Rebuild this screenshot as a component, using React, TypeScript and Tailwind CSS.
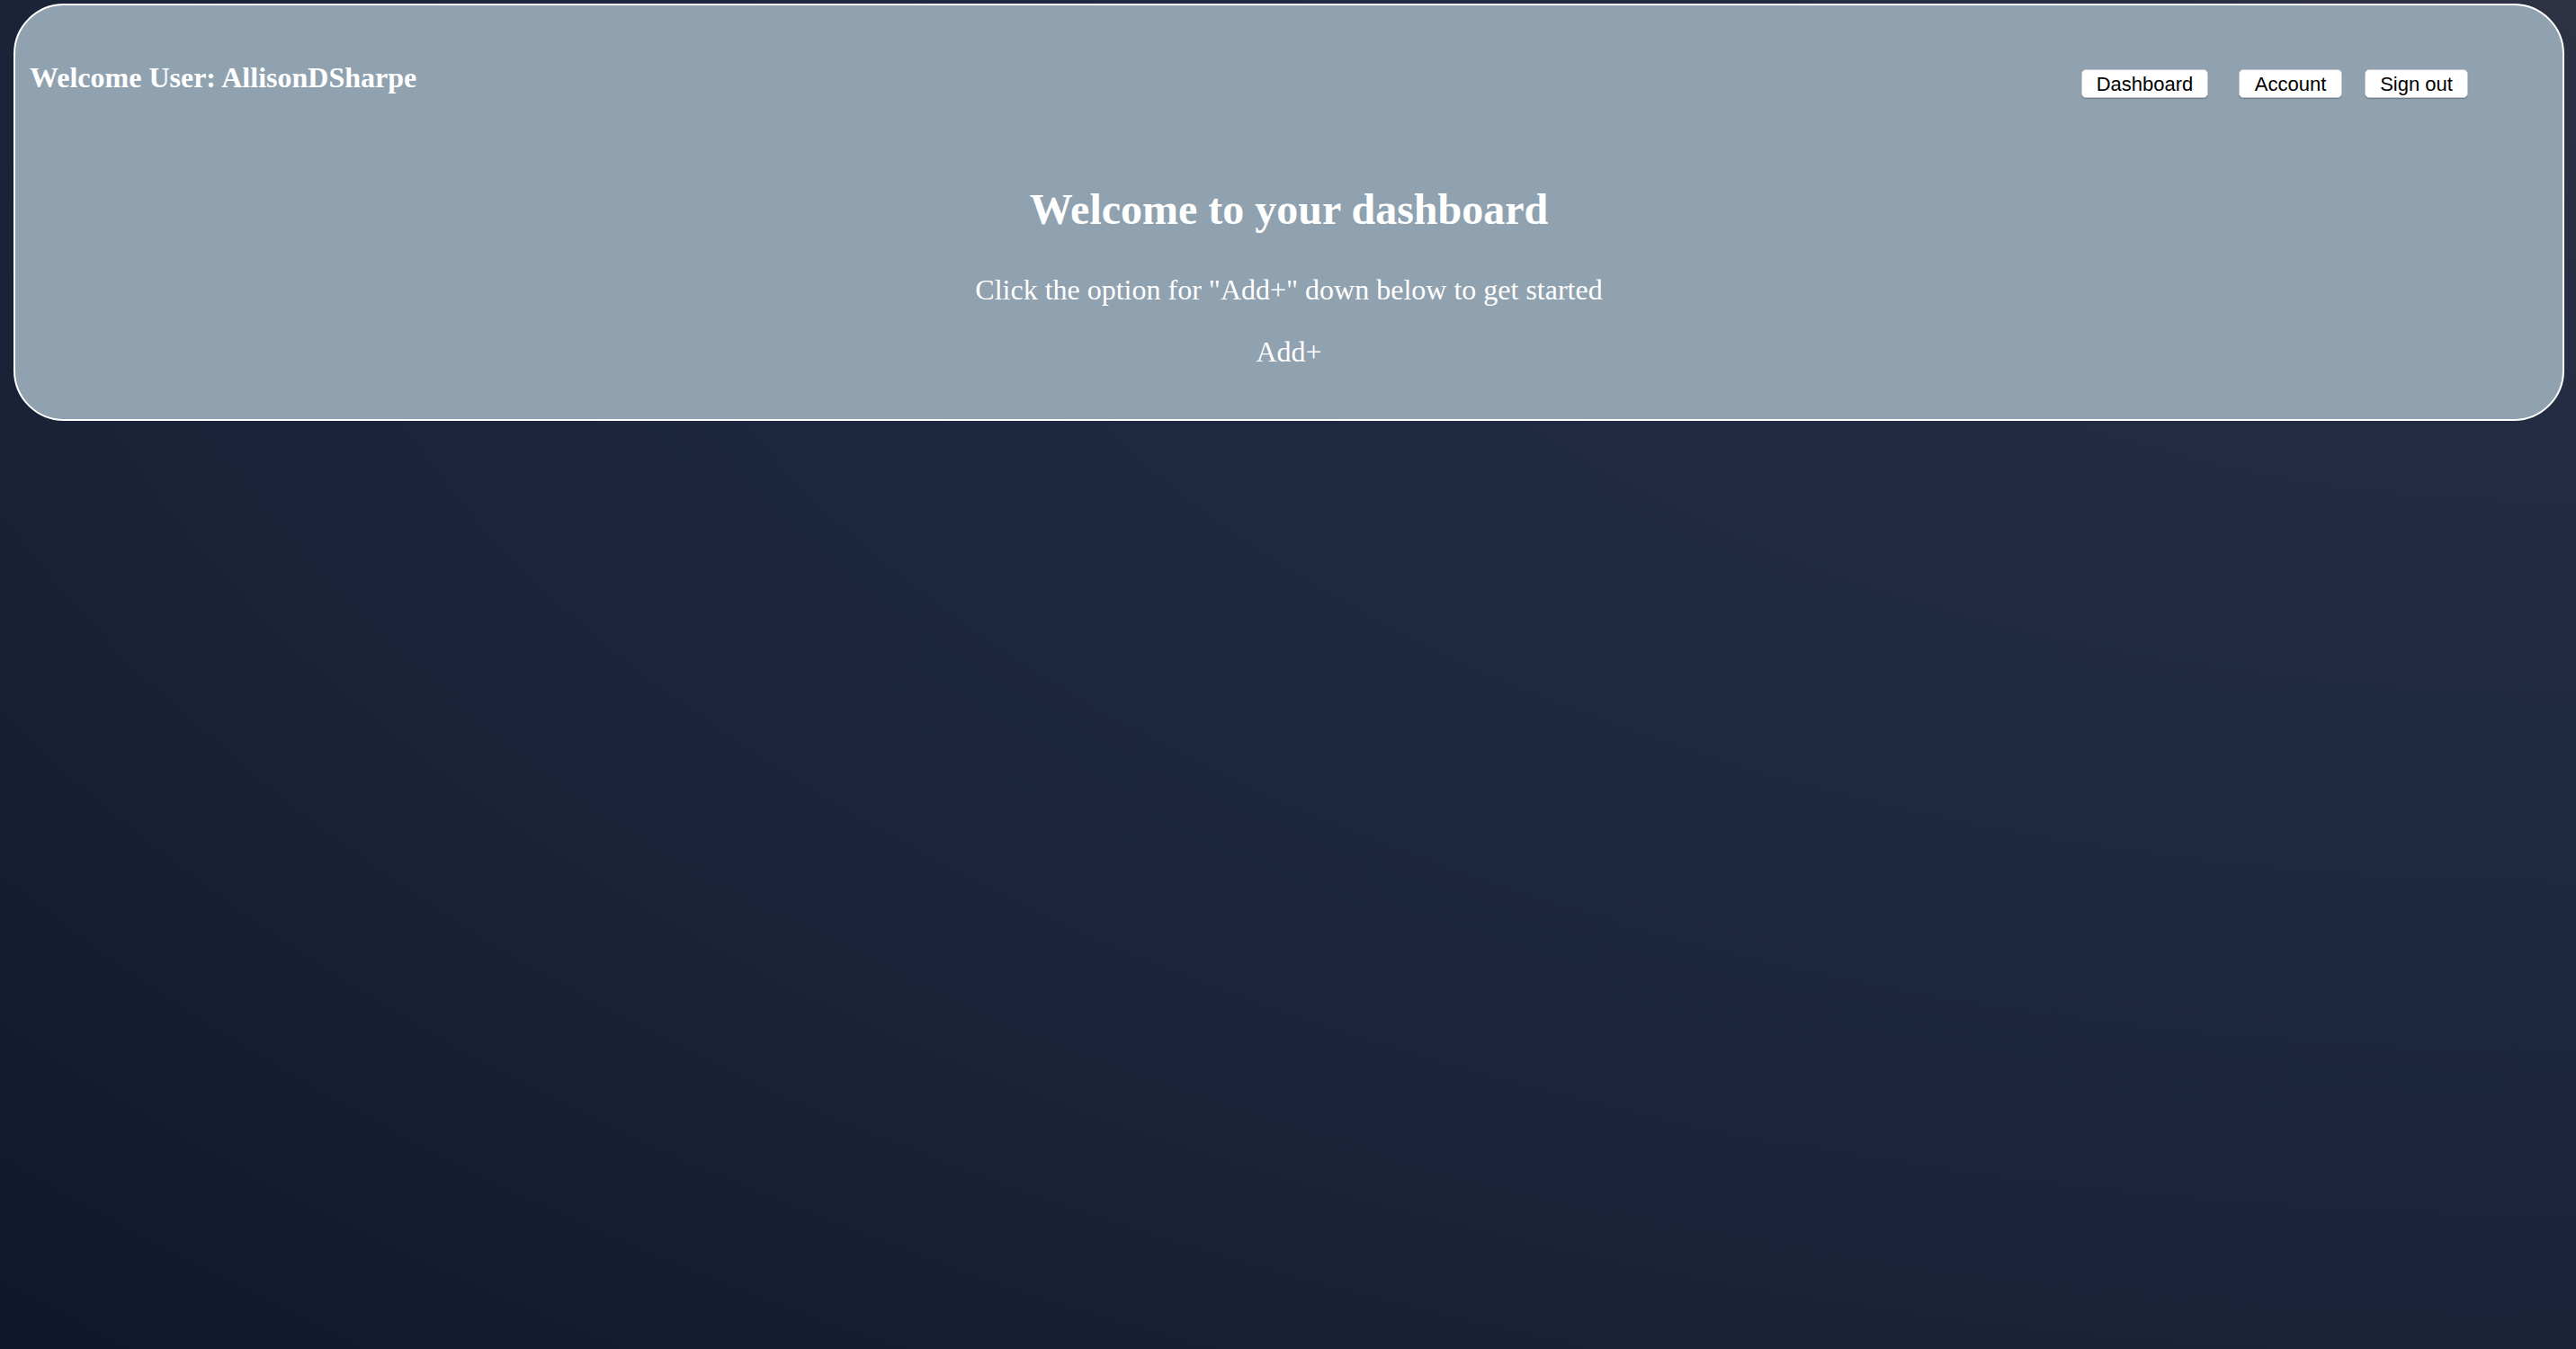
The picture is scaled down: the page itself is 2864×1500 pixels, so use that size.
const NAV_BUTTONS = [
  { label: "Dashboard", width: "w-[141px]", gap: "" },
  { label: "Account", width: "w-[115px]", gap: "ml-[34px]" },
  { label: "Sign out", width: "w-[115px]", gap: "ml-[25px]" },
];

export default function App() {
  return (
    <div className="min-h-screen w-full bg-[radial-gradient(ellipse_at_top_right,#2e3243_0%,#242c43_22%,#1e2841_45%,#1a2338_70%,#10172a_100%)] pt-[4px] pl-[15px] pr-[13px] font-['Liberation_Serif',serif]">
      {/* Header card */}
      <div className="rounded-[56px] border-2 border-white bg-[#90a2af] text-white">
        <div className="flex items-start justify-between pl-[16px] pr-[105px] pt-[63px]">
          <h3 className="text-[32px] font-bold leading-[35px]">Welcome User: AllisonDSharpe</h3>
          <div className="mt-[8px] flex">
            {NAV_BUTTONS.map((btn) => (
              <button
                key={btn.label}
                className={`${btn.width} ${btn.gap} flex h-[32px] items-center justify-center rounded-[5px] border border-[#c4c8cc] bg-white font-['Liberation_Sans',Arial,sans-serif] text-[22px] leading-[25px] text-black shadow-[0_1px_1px_rgba(0,0,0,0.25)]`}
              >
                {btn.label}
              </button>
            ))}
          </div>
        </div>

        <div className="flex flex-col items-center pb-[57px] pt-[97px] text-center">
          <h1 className="text-[48px] font-bold leading-[53px]">Welcome to your dashboard</h1>
          <p className="mt-[46px] text-[32px] leading-[35px]">Click the option for "Add+" down below to get started</p>
          <p className="mt-[34px] text-[32px] leading-[35px]">Add+</p>
        </div>
      </div>
    </div>
  );
}
